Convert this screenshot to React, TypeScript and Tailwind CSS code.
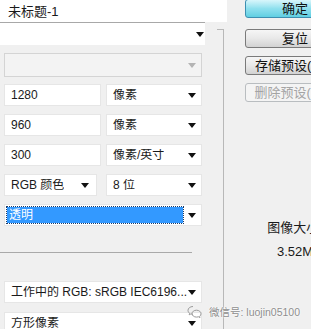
import React from "react";

const Arrow = ({ disabled = false }: { disabled?: boolean }) => (
  <svg width="8" height="5" viewBox="0 0 8 5" className="shrink-0">
    <path d="M0 0h8L4 5z" fill={disabled ? "#b4b4b4" : "#111111"} />
  </svg>
);

function Select({
  className = "",
  children,
  disabled = false,
}: {
  className?: string;
  children?: React.ReactNode;
  disabled?: boolean;
}) {
  return (
    <div
      className={`flex items-center justify-between border pl-[6px] pr-[5px] ${
        disabled ? "bg-[#f3f3f3] border-[#d4d4d4]" : "bg-white border-[#e6e6e6]"
      } ${className}`}
    >
      <span className="truncate">{children}</span>
      <Arrow disabled={disabled} />
    </div>
  );
}

function Field({ value }: { value: string }) {
  return (
    <div className="w-[97px] h-[22px] bg-white border border-[#e6e6e6] flex items-center pl-[6px]">
      {value}
    </div>
  );
}

function Button({
  label,
  variant = "normal",
  className = "",
}: {
  label: string;
  variant?: "default" | "normal" | "disabled";
  className?: string;
}) {
  const styles = {
    default:
      "border-[#3c8fb1] bg-gradient-to-b from-[#d8f6fb] via-[#8fe0ee] to-[#5fcfe2] text-[#111]",
    normal:
      "border-[#7a7a7a] bg-gradient-to-b from-[#f6f6f6] via-[#e8e8e8] to-[#d2d2d2] text-[#111]",
    disabled: "border-[#b9bdc0] bg-[#f4f4f4] text-[#a4a4a4]",
  }[variant];
  return (
    <div
      className={`w-[100px] h-[19px] rounded-[3px] border flex items-center justify-center whitespace-nowrap text-[13px] ${styles} ${className}`}
    >
      {label}
    </div>
  );
}

export default function App() {
  return (
    <div className="relative w-[311px] h-[329px] overflow-hidden bg-[#f0f0f0] flex text-[12px] leading-none text-[#1a1a1a] font-['Liberation_Sans','Noto_Sans_CJK_SC',sans-serif]">
      {/* left column */}
      <div className="relative w-[245px] shrink-0">
        {/* group frame corner */}
        <div className="absolute left-[217px] top-[29px] w-[7px] h-[320px] border-t border-r border-[#b8b8b8]" />

        <div className="relative w-[227px] h-[22px] bg-white flex items-center pl-[8px] text-[13px]">
          未标题-1
        </div>
        <div className="relative w-[205px] h-[23px] bg-white border-t border-[#a8a8a8] flex items-center justify-end pr-[1px]">
          <Arrow />
        </div>

        <div className="relative flex flex-col pl-[4px] pt-[8px]">
          <Select disabled className="w-[198px] h-[24px]" />

          <div className="mt-[7px] flex flex-col gap-[8px]">
            <div className="flex gap-[5px]">
              <Field value="1280" />
              <Select className="w-[96px] h-[22px]">像素</Select>
            </div>
            <div className="flex gap-[5px]">
              <Field value="960" />
              <Select className="w-[96px] h-[22px]">像素</Select>
            </div>
            <div className="flex gap-[5px]">
              <Field value="300" />
              <Select className="w-[96px] h-[22px]">像素/英寸</Select>
            </div>
            <div className="flex gap-[9px]">
              <Select className="w-[93px] h-[22px] pr-[7px]">RGB 颜色</Select>
              <Select className="w-[96px] h-[22px]">8 位</Select>
            </div>
            <div className="w-[198px] h-[22px] bg-white border border-[#e6e6e6] flex items-center justify-between pl-[2px] pr-[5px]">
              <div className="w-[176px] h-[16px] bg-[#3399ff] outline-1 outline-dotted outline-[#1b3a66] text-white flex items-center pl-[2px]">
                透明
              </div>
              <Arrow />
            </div>
          </div>

          <div className="ml-[-4px] mt-[26px] w-[192px] border-t border-[#a9a9a9]" />

          <Select className="mt-[28px] w-[198px] h-[22px]">
            工作中的 RGB: sRGB IEC6196...
          </Select>
          <Select className="mt-[9px] w-[198px] h-[22px]">方形像素</Select>
        </div>
      </div>

      {/* right column */}
      <div className="w-[100px] shrink-0 flex flex-col">
        <Button label="确定" variant="default" className="h-[18px] -mt-[1px]" />
        <Button label="复位" className="mt-[11px]" />
        <Button label="存储预设(S)..." className="mt-[8px]" />
        <Button label="删除预设(D)..." variant="disabled" className="mt-[8px]" />

        <div className="mt-[119px] text-center text-[13px]">图像大小:</div>
        <div className="mt-[11px] text-center text-[13px]">3.52M</div>
      </div>

      {/* watermark */}
      <div className="absolute left-[187px] top-[305px] flex items-center gap-[7px] text-[10.5px] text-[#8e8e8e] [text-shadow:0_0_2px_#fff,0_0_2px_#fff]">
        <svg width="15" height="14" viewBox="0 0 15 14" fill="none" stroke="#9a9a9a" strokeWidth="1">
          <path d="M6 1.5C3 1.5 1 3.3 1 5.4c0 1.2.6 2.2 1.6 2.9L2.2 9.8l1.7-.9c.6.2 1.3.3 2 .3" />
          <path d="M9.5 5.2c2.5 0 4.5 1.6 4.5 3.6 0 1-.5 1.9-1.3 2.5l.3 1.3-1.4-.8c-.6.2-1.3.3-2.1.3-2.5 0-4.5-1.6-4.5-3.5s2-3.4 4.5-3.4z" />
        </svg>
        <span className="whitespace-nowrap">微信号: luojin05100</span>
      </div>
    </div>
  );
}
